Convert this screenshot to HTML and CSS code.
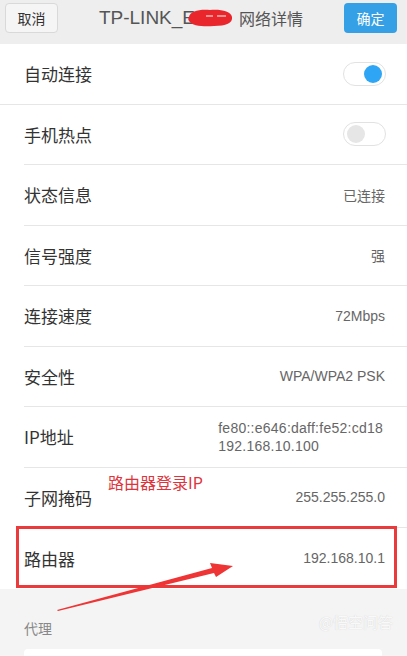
FILE: index.html
```html
<!DOCTYPE html>
<html lang="zh-CN">
<head>
  <meta charset="UTF-8">
  <meta name="viewport" content="width=device-width, initial-scale=1.0">
  <title>网络详情</title>
  <link rel="stylesheet" href="styles.css">
</head>
<body>

  <div class="page">
    <div class="header">
      <button class="btn cancelBtn">取消</button>
      <div class="title">
        <span>TP-LINK_E</span>
        <svg class="scribble" width="46" height="20" viewBox="0 0 46 20">
          <path d="M2 9 C3 3 13 1 23 2 C33 1 44 3 45 9 C46 15 39 18 27 18 C17 19 5 18 2 13 C1 12 1 10 2 9 Z" fill="#e8262b"/>
          <path d="M19 8 L26 8 M30 8 L39 8" stroke="#f7b6b6" stroke-width="1.4"/>
        </svg>
        <span class="titleCn">网络详情</span>
      </div>
      <button class="btn okBtn">确定</button>
    </div>

    <div class="list">
      <div class="row full">
        <span class="label">自动连接</span>
        <span class="switch on"><span class="knob"></span></span>
      </div>
      <div class="row">
        <span class="label">手机热点</span>
        <span class="switch"><span class="knob"></span></span>
      </div>
      <div class="row">
        <span class="label">状态信息</span>
        <span class="value">已连接</span>
      </div>
      <div class="row">
        <span class="label">信号强度</span>
        <span class="value">强</span>
      </div>
      <div class="row">
        <span class="label">连接速度</span>
        <span class="value">72Mbps</span>
      </div>
      <div class="row">
        <span class="label">安全性</span>
        <span class="value">WPA/WPA2 PSK</span>
      </div>
      <div class="row">
        <span class="label">IP地址</span>
        <span class="value multi">fe80::e646:daff:fe52:cd18<br>192.168.10.100</span>
      </div>
      <div class="row">
        <span class="label">子网掩码</span>
        <span class="value">255.255.255.0</span>
      </div>
      <div class="row last">
        <span class="label">路由器</span>
        <span class="value">192.168.10.1</span>
      </div>
    </div>

    <div class="proxySection">
      <div class="sectionTitle">代理</div>
      <div class="proxyBox"></div>
      <div class="watermark">@悟空问答</div>
    </div>

    <!-- annotation drawn on top of the screenshot -->
    <div class="markBox"></div>
    <div class="markText">路由器登录IP</div>
    <svg class="markArrow" width="407" height="656" viewBox="0 0 407 656">
      <polygon points="57,610 212,568 210,563 233,566 216,577 214,573 58,611" fill="#ee3434"/>
    </svg>
  </div>

</body>
</html>
```

FILE: styles.css
```css
* {
  box-sizing: border-box;
}

body {
  margin: 0;
  font-family: "Liberation Sans", "Noto Sans CJK SC", sans-serif;
  background-color: #f4f4f4;
}

.page {
  position: relative;
  width: 407px;
  height: 656px;
  overflow: hidden;
}

.header {
  display: flex;
  align-items: center;
  height: 44px;
  padding: 3px 10px 11px 5px;
  background-color: #eeeeee;
}

.btn {
  width: 53px;
  height: 30px;
  border-radius: 4px;
  font-family: "Noto Sans CJK SC", sans-serif;
  font-size: 14px;
  padding: 0;
}

.cancelBtn {
  background-color: #f5f5f5;
  border: 1px solid #d9d9d9;
  color: #333;
}

.okBtn {
  background-color: #35a0e6;
  border: none;
  color: white;
}

.title {
  flex: 1;
  display: flex;
  justify-content: center;
  align-items: center;
  font-size: 19px;
  color: #555;
}

.scribble {
  margin-left: -8px;
  margin-right: 6px;
}

.titleCn {
  font-family: "Noto Sans CJK SC", sans-serif;
  font-size: 16px;
}

.list {
  background-color: white;
}

.row {
  display: flex;
  justify-content: space-between;
  align-items: center;
  height: 60.5px;
  margin-left: 24px;
  padding-right: 22px;
  border-bottom: 1px solid #e6e6e6;
}

.row.full {
  margin-left: 0;
  padding-left: 24px;
}

.row.last {
  border-bottom: none;
}

.label {
  font-family: "Noto Sans CJK SC", sans-serif;
  font-size: 17px;
  color: #333;
}

.value {
  font-size: 14px;
  color: #666;
}

.value.multi {
  line-height: 18px;
  margin-right: 2px;
  letter-spacing: 0.25px;
}

.switch {
  position: relative;
  width: 43px;
  height: 24px;
  border: 1px solid #e2e2e2;
  border-radius: 12px;
  background-color: white;
  margin-right: -1px;
}

.knob {
  position: absolute;
  top: 2px;
  left: 3px;
  width: 18px;
  height: 18px;
  border-radius: 50%;
  background-color: #e6e6e6;
}

.switch.on .knob {
  left: auto;
  right: 3px;
  background-color: #2ea6f5;
}

.proxySection {
  position: relative;
  padding: 29px 25px 0 24px;
}

.sectionTitle {
  font-family: "Noto Sans CJK SC", sans-serif;
  font-size: 14px;
  color: #888;
  line-height: 20px;
}

.proxyBox {
  margin-top: 11px;
  height: 40px;
  background-color: white;
  border-radius: 4px;
}

.watermark {
  position: absolute;
  right: 14px;
  top: 22px;
  font-family: "Noto Sans CJK SC", sans-serif;
  font-size: 15px;
  color: rgba(255, 255, 255, 0.9);
  text-shadow: 0 0 1px #c8c8c8;
}

.markBox {
  position: absolute;
  left: 16px;
  top: 526px;
  width: 381px;
  height: 62px;
  border: 3px solid #ea3a3c;
}

.markText {
  position: absolute;
  left: 108px;
  top: 470px;
  font-family: "Noto Sans CJK SC", sans-serif;
  font-size: 16px;
  color: #e0343c;
}

.markArrow {
  position: absolute;
  left: 0;
  top: 0;
}
```
